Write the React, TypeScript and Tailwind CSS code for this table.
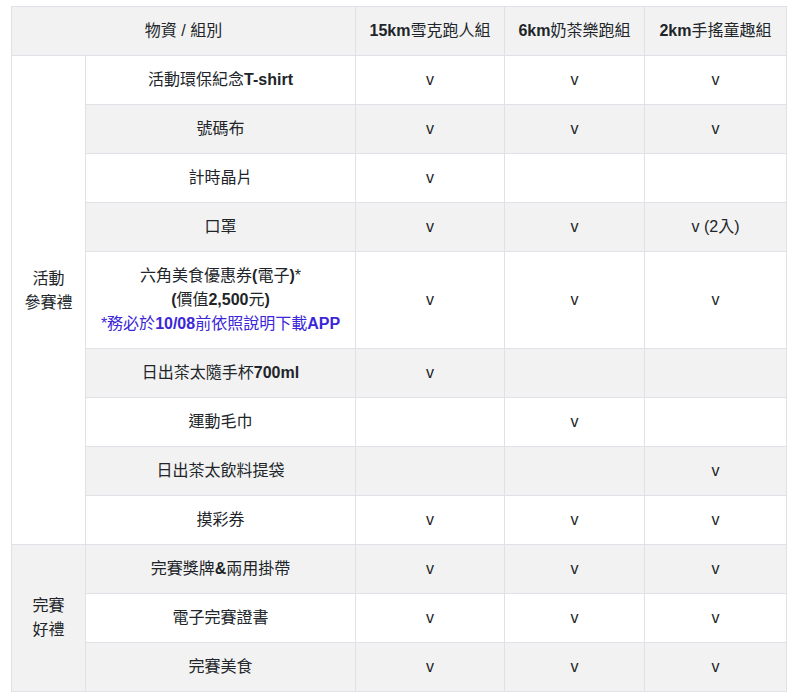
import React from "react";

const B = ({ children }: { children: React.ReactNode }) => <span className="font-bold">{children}</span>;
const V = () => <span>v</span>;

type Row = { item: React.ReactNode; a: React.ReactNode; b: React.ReactNode; c: React.ReactNode };

const rows1: Row[] = [
  { item: <>活動環保紀念<B>T-shirt</B></>, a: <V />, b: <V />, c: <V /> },
  { item: <>號碼布</>, a: <V />, b: <V />, c: <V /> },
  { item: <>計時晶片</>, a: <V />, b: null, c: null },
  { item: <>口罩</>, a: <V />, b: <V />, c: <><V /> (2入)</> },
  {
    item: (
      <>
        六角美食優惠券<B>(</B>電子<B>)</B>*<br />
        <B>(</B>價值<B>2,500</B>元<B>)</B><br />
        <span className="text-[#3b27d8]">*務必於<B>10/08</B>前依照說明下載<B>APP</B></span>
      </>
    ),
    a: <V />, b: <V />, c: <V />,
  },
  { item: <>日出茶太隨手杯<B>700ml</B></>, a: <V />, b: null, c: null },
  { item: <>運動毛巾</>, a: null, b: <V />, c: null },
  { item: <>日出茶太飲料提袋</>, a: null, b: null, c: <V /> },
  { item: <>摸彩券</>, a: <V />, b: <V />, c: <V /> },
];

const rows2: Row[] = [
  { item: <>完賽獎牌<B>&amp;</B>兩用掛帶</>, a: <V />, b: <V />, c: <V /> },
  { item: <>電子完賽證書</>, a: <V />, b: <V />, c: <V /> },
  { item: <>完賽美食</>, a: <V />, b: <V />, c: <V /> },
];

const td = "border border-[#dee2e6] py-3 px-2 text-center align-middle";

export default function App() {
  let idx = 0;
  const renderRows = (rows: Row[], group: React.ReactNode, groupPad: string) =>
    rows.map((r, i) => {
      const bg = idx++ % 2 === 0 ? "bg-white" : "bg-[#f2f2f2]";
      return (
        <tr key={idx} className={bg}>
          {i === 0 && (
            <td rowSpan={rows.length} className={`${td} ${groupPad}`}>
              {group}
            </td>
          )}
          <td className={td}>{r.item}</td>
          <td className={td}>{r.a}</td>
          <td className={td}>{r.b}</td>
          <td className={td}>{r.c}</td>
        </tr>
      );
    });

  return (
    <div
      className="min-h-[695px] bg-white pl-[11px] pt-[6px] text-[16px] leading-[24px] text-[#212529]"
      style={{ fontFamily: '"Liberation Sans", "Noto Sans CJK TC", sans-serif' }}
    >
      <table className="w-[775px] table-fixed border-collapse">
        <colgroup>
          <col className="w-[74px]" />
          <col className="w-[270px]" />
          <col className="w-[149px]" />
          <col className="w-[140px]" />
          <col className="w-[142px]" />
        </colgroup>
        <thead>
          <tr className="bg-[#f2f2f2]">
            <th colSpan={2} className={`${td} font-normal`}>物資 / 組別</th>
            <th className={`${td} font-normal`}><B>15km</B>雪克跑人組</th>
            <th className={`${td} font-normal`}><B>6km</B>奶茶樂跑組</th>
            <th className={`${td} font-normal`}><B>2km</B>手搖童趣組</th>
          </tr>
        </thead>
        <tbody>
          {renderRows(rows1, <>活動<br />參賽禮</>, "pb-[31px]")}
          {renderRows(rows2, <>完賽<br />好禮</>, "")}
        </tbody>
      </table>
    </div>
  );
}
